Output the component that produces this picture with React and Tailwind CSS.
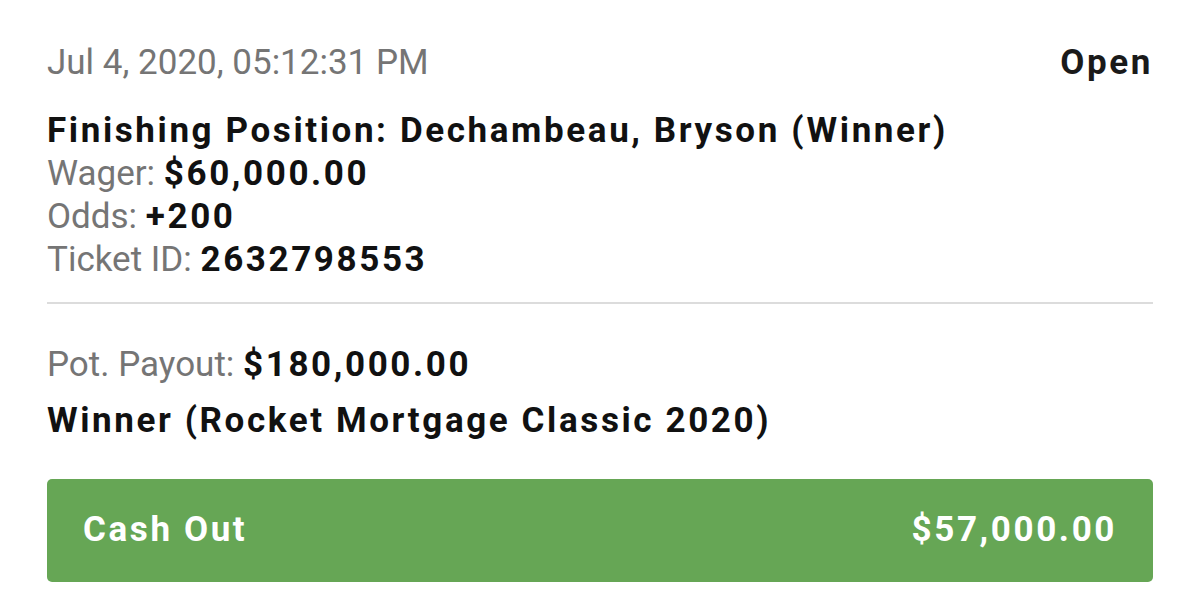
export default function App() {
  return (
    <div className="min-h-screen w-full bg-white font-['Roboto',sans-serif] text-[35px]">
      <div className="px-[47px] pt-[42px]">
        <div className="flex items-center justify-between leading-[42px]">
          <span className="text-[#757575]">Jul 4, 2020, 05:12:31 PM</span>
          <span className="font-bold tracking-[2.6px] text-[#1a1a1a]">Open</span>
        </div>

        <div className="mt-[25px] leading-[43px]">
          <div className="font-bold tracking-[2.6px] text-[#111]">
            Finishing Position: Dechambeau, Bryson (Winner)
          </div>
          <div>
            <span className="text-[#757575]">Wager: </span>
            <span className="font-bold tracking-[2.6px] text-[#111]">$60,000.00</span>
          </div>
          <div>
            <span className="text-[#757575]">Odds: </span>
            <span className="font-bold tracking-[2.6px] text-[#111]">+200</span>
          </div>
          <div>
            <span className="text-[#757575]">Ticket ID: </span>
            <span className="font-bold tracking-[2.6px] text-[#111]">2632798553</span>
          </div>
        </div>

        <div className="mt-[21px] h-[2px] w-full bg-[#dcdcdc]" />

        <div className="mt-[40px] leading-[42px]">
          <span className="text-[#757575]">Pot. Payout: </span>
          <span className="font-bold tracking-[2.6px] text-[#111]">$180,000.00</span>
        </div>
        <div className="mt-[14px] font-bold leading-[42px] tracking-[2.6px] text-[#111]">
          Winner (Rocket Mortgage Classic 2020)
        </div>

        <button className="mt-[37px] flex h-[103px] w-full items-center justify-between rounded-[5px] bg-[#66a655] pl-[36px] pr-[36px] font-bold tracking-[2.6px] text-white">
          <span>Cash Out</span>
          <span>$57,000.00</span>
        </button>
      </div>
    </div>
  );
}
